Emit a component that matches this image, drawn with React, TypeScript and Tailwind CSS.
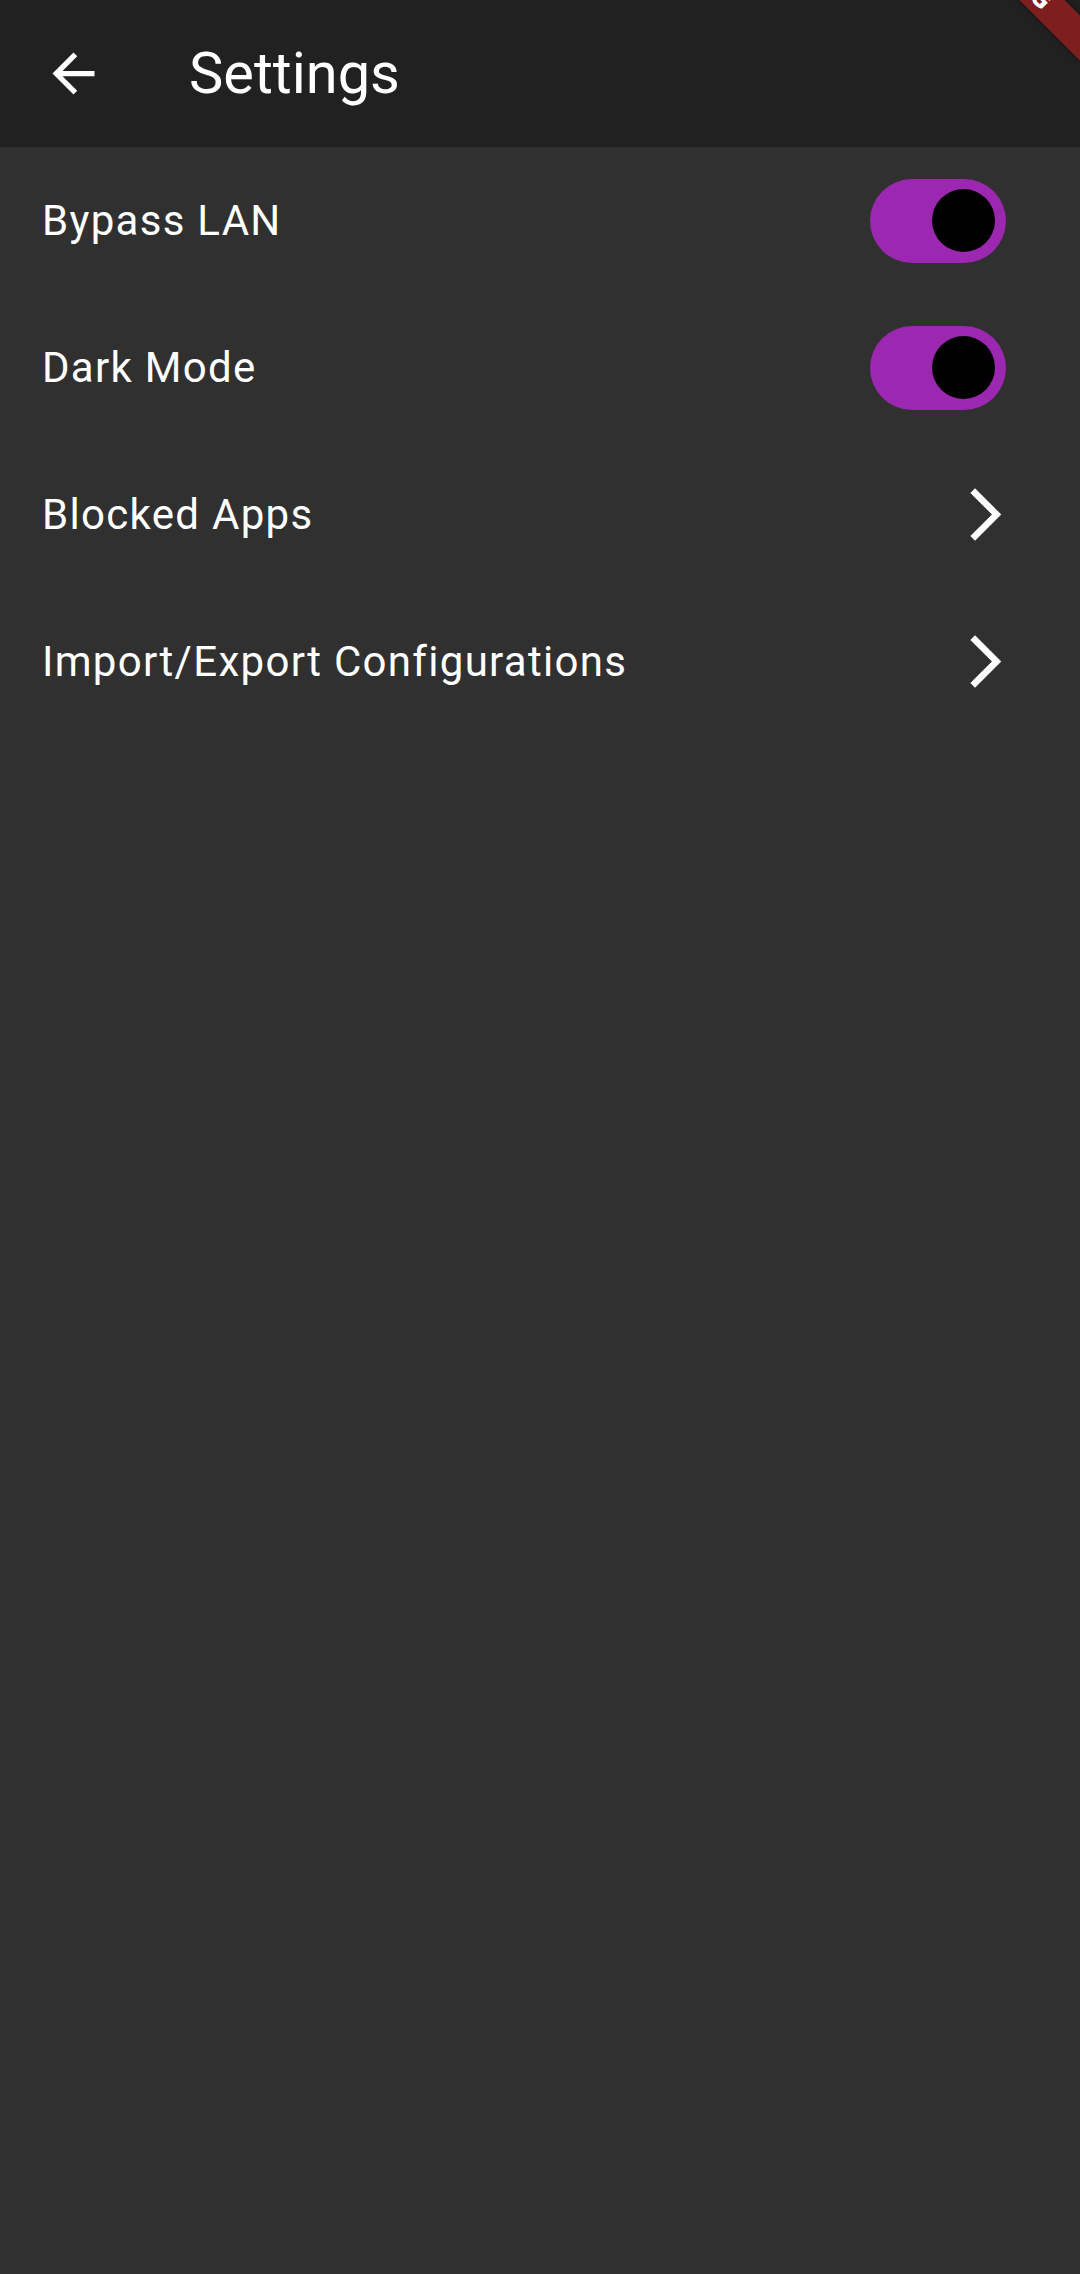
import React from "react";

const font = { fontFamily: "Roboto, 'Noto Sans', sans-serif" };

function BackArrow() {
  return (
    <svg viewBox="0 0 24 24" className="h-[63px] w-[63px]" fill="#ffffff">
      <path d="M20 11H7.83l5.59-5.59L12 4l-8 8 8 8 1.41-1.41L7.83 13H20v-2z" />
    </svg>
  );
}

function Chevron() {
  return (
    <svg viewBox="0 0 24 24" className="h-[63px] w-[63px]" fill="#ffffff">
      <path d="M6.23 20.23 8 22l10-10L8 2 6.23 3.77 14.46 12z" />
    </svg>
  );
}

function Toggle() {
  return (
    <div className="mr-[11px] flex h-[84px] w-[136px] items-center justify-end rounded-full bg-[#9c27b0] pr-[11px]">
      <div className="h-[63px] w-[63px] rounded-full bg-black" />
    </div>
  );
}

function Row({ label, trailing }: { label: string; trailing: React.ReactNode }) {
  return (
    <div className="flex h-[147px] items-center justify-between pl-[42px] pr-[63px]">
      <span className="text-[42px] leading-none tracking-[1.3px] text-white">{label}</span>
      {trailing}
    </div>
  );
}

export default function App() {
  return (
    <div className="relative h-[2274px] w-[1080px] overflow-hidden bg-[#303030]" style={font}>
      <header className="flex h-[147px] items-center bg-[#212121]">
        <div className="flex h-[147px] w-[147px] items-center justify-center">
          <BackArrow />
        </div>
        <h1 className="ml-[42px] text-[57.75px] font-normal leading-none text-white">Settings</h1>
      </header>

      <Row label="Bypass LAN" trailing={<Toggle />} />
      <Row label="Dark Mode" trailing={<Toggle />} />
      <Row label="Blocked Apps" trailing={<Chevron />} />
      <Row label="Import/Export Configurations" trailing={<Chevron />} />

      {/* debug banner */}
      <div className="absolute left-[912px] top-[-41px] flex h-[31.5px] w-[210px] rotate-45 items-center justify-center bg-[#7f1e1e] shadow-[0_0_6px_rgba(0,0,0,0.5)]">
        <span className="text-[26.8px] font-black leading-none text-white">DEBUG</span>
      </div>
    </div>
  );
}
